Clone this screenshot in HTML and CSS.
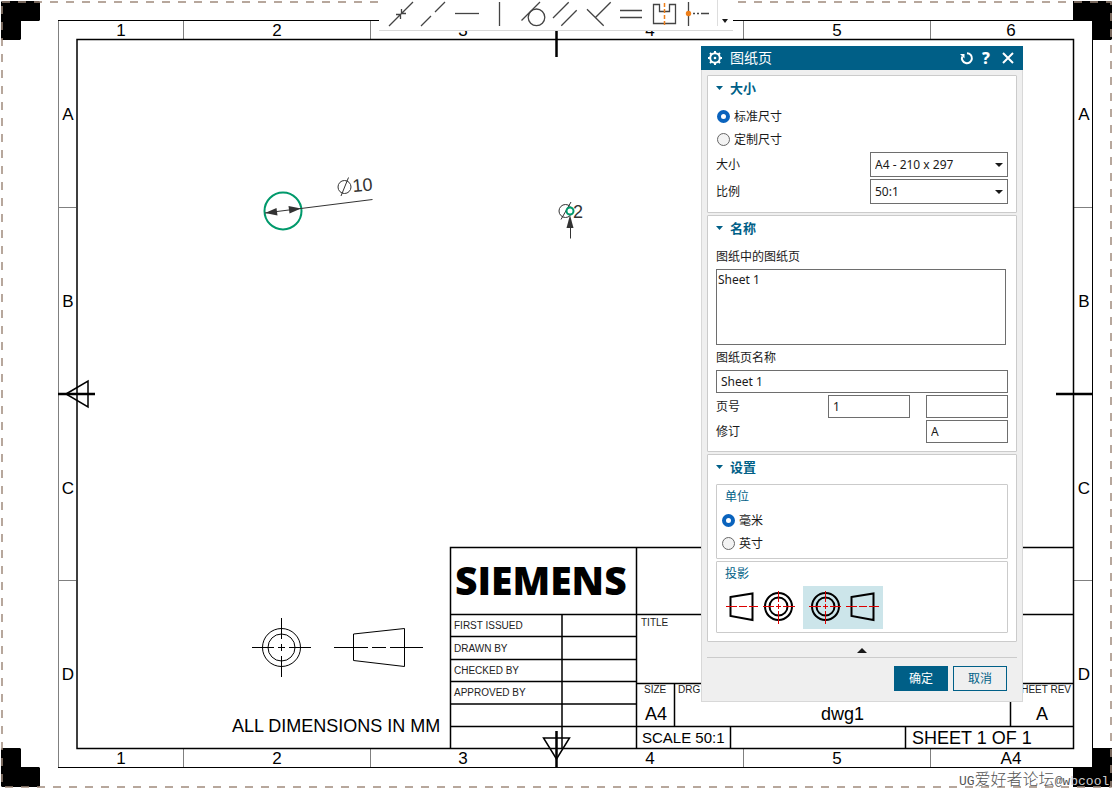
FILE: index.html
```html
<!DOCTYPE html>
<html lang="zh-CN">
<head>
<meta charset="utf-8">
<title>图纸页</title>
<link rel="stylesheet" href="styles.css">
</head>
<body>
<main class="workspace">
  <svg class="drawing" viewBox="0 0 1115 791" role="img" aria-label="dwg1">
    <!-- corner marks -->
    <g class="solid">
      <path d="M2 1H39L40 2V20L39 21H21V39L20 40H2L1 39V2Z"/>
      <path d="M1073 1H1111L1112 2V39L1111 40H1092V21H1073Z"/>
      <path d="M2 748H20L21 749V767H39L40 768V786L39 787H2L1 786V749Z"/>
      <path d="M1092 748H1112V787H1073V767H1092Z"/>
    </g>
    <path class="sheet-edge" d="M2 2H1111V787H2Z"/>
    <!-- frame -->
    <path class="thin gray" d="M58.5 21V767M183.500 21V39M370.500 21V39M743.500 21V39M930.500 21V39M183.500 749V767M370.500 749V767M743.500 749V767M930.500 749V767M58 207.500H76M58 580.500H76M1074 207.500H1092M1074 580.500H1092"/>
    <path class="thin" d="M58 20.500H1092.500V767.500H58"/>
    <path class="medium" d="M77 39.500H1073.500V748.500H77Z"/>
    <path class="heavy" d="M556.500 21V57M556.500 731V767M1056 394H1092M58 394H95"/>
    <path class="medium" d="M66 394L88 381V407ZM543.500 738H569.500L556.500 759Z"/>
    <g class="zone">
      <text x="121" y="36">1</text><text x="277" y="36">2</text><text x="463" y="36">3</text><text x="650" y="36">4</text><text x="837" y="36">5</text><text x="1011" y="36">6</text>
      <text x="121" y="764">1</text><text x="277" y="764">2</text><text x="463" y="764">3</text><text x="650" y="764">4</text><text x="837" y="764">5</text><text x="1011" y="764">A4</text>
      <text x="68" y="120">A</text><text x="68" y="307">B</text><text x="68" y="494">C</text><text x="68" y="680">D</text>
      <text x="1084" y="120">A</text><text x="1084" y="307">B</text><text x="1084" y="494">C</text><text x="1084" y="680">D</text>
    </g>
    <!-- diameter 10 -->
    <circle class="feature" cx="283" cy="211" r="18.500"/>
    <path class="dim" d="M265 213L372.500 199.500"/>
    <path class="arrowhead" d="M265 213L276.500 208L277.500 215.500ZM301 208.500L288.500 206L289.500 213.500Z"/>
    <g class="dim"><circle cx="344.500" cy="187" r="6.500"/><path d="M341 196L348.500 177.500"/></g>
    <text class="note dark" x="353" y="192" transform="rotate(-5 353 192)">10</text>
    <!-- diameter 2 -->
    <g class="dim"><circle cx="565.500" cy="211" r="6.500"/><path d="M561 219.500L571 202M570.500 226V238.500"/></g>
    <text class="note dark" x="573" y="218">2</text>
    <path class="arrowhead" d="M570 215L573.500 228H566.500Z"/>
    <circle class="feature paper" cx="570" cy="211" r="3.500"/>
    <!-- projection symbol -->
    <g class="thin">
      <circle cx="281.500" cy="647.500" r="19"/><circle cx="281.500" cy="647.500" r="13.500"/>
      <path d="M252 647.500H274M278 647.500H285M289 647.500H311M281.500 618V639M281.500 644V651M281.500 656V677"/>
      <path d="M353.500 634L404.500 628.500V666.500L353.500 660.500ZM334 647.500H368M372 647.500H386M390 647.500H423"/>
    </g>
    <text class="note" x="232" y="732">ALL DIMENSIONS IN MM</text>
    <!-- title block -->
    <path class="medium" d="M450.500 748V547.500H1073M636.500 547V748M450 614.500H1073M562 614V748M450 636.500H636M450 659.500H636M450 681.500H636M450 704H636M450 726.500H1073M636 683.500H1073M674.500 683V726M1010.500 683V726M730.500 726V748M905.500 726V748"/>
    <text class="brand" x="455" y="595">SIEMENS</text>
    <g class="caption">
      <text x="454" y="629">FIRST ISSUED</text><text x="454" y="652">DRAWN BY</text><text x="454" y="674">CHECKED BY</text><text x="454" y="696">APPROVED BY</text>
      <text x="641" y="626">TITLE</text><text x="644" y="693">SIZE</text><text x="678" y="693">DRG NO.</text><text x="1071" y="693" text-anchor="end">SHEET REV</text>
    </g>
    <text class="note" x="645" y="720">A4</text>
    <text class="note" x="821" y="720">dwg1</text>
    <text class="note" x="1036" y="720">A</text>
    <text class="scale-note" x="642" y="743">SCALE 50:1</text>
    <text class="note" x="912" y="744">SHEET 1 OF 1</text>
    <text class="watermark" x="959" y="785">UG<tspan class="watermark-han">爱好者论坛</tspan>@w<tspan class="watermark-light">bcool</tspan></text>
  </svg>

  <nav class="toolbar" aria-label="几何约束">
    <button class="tool" type="button" aria-label="点在线上"><svg viewBox="0 0 33 30"><path d="M5 26L29 2M17.500 9V13.500H22M12 14.500H16.500V19"/></svg></button>
    <button class="tool" type="button" aria-label="共线"><svg viewBox="0 0 33 30"><path d="M4 26L14 16M18 12L28 2"/></svg></button>
    <button class="tool" type="button" aria-label="水平"><svg viewBox="0 0 33 30"><path d="M5 13.500H29"/></svg></button>
    <button class="tool" type="button" aria-label="竖直"><svg viewBox="0 0 33 30"><path d="M16.500 2V26"/></svg></button>
    <button class="tool" type="button" aria-label="相切"><svg viewBox="0 0 33 30"><path d="M5.500 20.500L24 2"/><circle cx="20.500" cy="17.300" r="8.300"/></svg></button>
    <button class="tool" type="button" aria-label="平行"><svg viewBox="0 0 33 30"><path d="M4 18L19.700 2.300M12.300 25.700L27.700 10.300"/></svg></button>
    <button class="tool" type="button" aria-label="垂直"><svg viewBox="0 0 33 30"><path d="M28.700 2.300L13.700 17.300M5 9.300L21.700 25.700"/></svg></button>
    <button class="tool" type="button" aria-label="等长"><svg viewBox="0 0 33 30"><path d="M5 10.500H27M5 17.500H27"/></svg></button>
    <button class="tool" type="button" aria-label="对称"><svg viewBox="0 0 33 30"><path d="M5.500 4.500H11.500V11.500H21.500V4.500H27.500V23.500H5.500Z"/><path class="accent-line" d="M16.500 3V25"/></svg></button>
    <button class="tool" type="button" aria-label="中点对齐"><svg viewBox="0 0 33 30"><path d="M7.500 2V26M12 13.500H14M16 13.500H18M20 13.500H28"/><circle class="accent-dot" cx="7.500" cy="13.500" r="2.700"/></svg></button>
    <button class="tool-more" type="button" aria-label="更多"><svg viewBox="0 0 6 4"><path d="M0 0H6L3 4Z"/></svg></button>
  </nav>

  <form class="dialog" aria-labelledby="dialog-title">
    <header class="dialog-header">
      <svg class="gear" viewBox="0 0 16 16"><circle cx="8" cy="8" r="4.800"/><circle class="gear-core" cx="8" cy="8" r="1.300"/><path d="M8 1V3M8 13V15M1 8H3M13 8H15M3 3L4.500 4.500M11.500 11.500L13 13M13 3L11.500 4.500M4.500 11.500L3 13"/></svg>
      <h1 class="dialog-title" id="dialog-title">图纸页</h1>
      <button class="header-button" type="button" aria-label="重置"><svg viewBox="0 0 16 16"><path d="M9 3.200A5 5 0 1 1 4.200 6.500"/><path class="header-fill" d="M2 4H6.500V8.500Z"/></svg></button>
      <button class="header-button help" type="button" aria-label="帮助">?</button>
      <button class="header-button close" type="button" aria-label="关闭"><svg viewBox="0 0 16 16"><path d="M3 3L13 13M13 3L3 13"/></svg></button>
    </header>
    <div class="dialog-body">
      <section class="panel">
        <h2 class="panel-title"><svg class="disclosure" viewBox="0 0 7 4"><path d="M0 0H7L3.500 4Z"/></svg>大小</h2>
        <div class="panel-content">
          <label class="radio-row"><input class="radio" type="radio" name="size-kind" checked>标准尺寸</label>
          <label class="radio-row"><input class="radio" type="radio" name="size-kind">定制尺寸</label>
          <div class="select-rows">
            <div class="field-row"><label for="size">大小</label><span class="select-box"><select class="select" id="size"><option>A4 - 210 x 297</option></select><svg class="select-arrow" viewBox="0 0 8 4"><path d="M0 0H8L4 4Z"/></svg></span></div>
            <div class="field-row"><label for="ratio">比例</label><span class="select-box"><select class="select" id="ratio"><option>50:1</option></select><svg class="select-arrow" viewBox="0 0 8 4"><path d="M0 0H8L4 4Z"/></svg></span></div>
          </div>
        </div>
      </section>
      <section class="panel">
        <h2 class="panel-title"><svg class="disclosure" viewBox="0 0 7 4"><path d="M0 0H7L3.500 4Z"/></svg>名称</h2>
        <div class="panel-content">
          <label class="block-label" for="sheets">图纸中的图纸页</label>
          <textarea class="sheet-list" id="sheets">Sheet 1</textarea>
          <label class="block-label" for="sheet-name">图纸页名称</label>
          <div class="input-rows">
            <input class="input" id="sheet-name" type="text" value="Sheet 1">
            <div class="field-row"><label for="page">页号</label><span class="pair"><input class="input short" id="page" type="text" value="1"><input class="input short" type="text" aria-label="辅助页号"></span></div>
            <div class="field-row"><label for="revision">修订</label><input class="input short" id="revision" type="text" value="A"></div>
          </div>
        </div>
      </section>
      <section class="panel">
        <h2 class="panel-title"><svg class="disclosure" viewBox="0 0 7 4"><path d="M0 0H7L3.500 4Z"/></svg>设置</h2>
        <div class="panel-content groups">
          <div class="group">
            <h3 class="group-title">单位</h3>
            <label class="radio-row"><input class="radio" type="radio" name="unit" checked>毫米</label>
            <label class="radio-row"><input class="radio" type="radio" name="unit">英寸</label>
          </div>
          <div class="group">
            <h3 class="group-title">投影</h3>
            <div class="projections">
              <button class="projection" type="button" aria-label="第一角投影" aria-pressed="false"><svg viewBox="0 0 80 43"><path class="shape" d="M7.500 11L29.500 7.500V34L7.500 30Z"/><circle class="shape" cx="55.500" cy="20.500" r="13.500"/><circle class="shape" cx="55.500" cy="20.500" r="9"/><path class="axis" d="M3 20.500H14M16 20.500H24M26 20.500H35M40 20.500H51M53 20.500H58M60 20.500H72M55.500 5V16M55.500 18V23M55.500 25V38"/></svg></button>
              <button class="projection selected" type="button" aria-label="第三角投影" aria-pressed="true"><svg viewBox="0 0 80 43"><circle class="shape" cx="22.500" cy="20.500" r="13.500"/><circle class="shape" cx="22.500" cy="20.500" r="9"/><path class="shape" d="M48.500 11L70.500 7.500V34L48.500 30Z"/><path class="axis" d="M6 20.500H18M20 20.500H25M27 20.500H38M43 20.500H54M56 20.500H64M66 20.500H76M22.500 5V16M22.500 18V23M22.500 25V38"/></svg></button>
            </div>
          </div>
        </div>
      </section>
      <button class="collapse" type="button" aria-label="收起"><svg viewBox="0 0 10 5"><path d="M0 5H10L5 0Z"/></svg></button>
      <footer class="actions">
        <button class="action primary" type="submit">确定</button>
        <button class="action" type="button">取消</button>
      </footer>
    </div>
  </form>
</main>
</body>
</html>
```

FILE: styles.css
```css
* { box-sizing: border-box; }

body {
  margin: 0;
  background: #fff;
  color: #1a1a1a;
  font: 12px/16px "Noto Sans", "Noto Sans CJK SC", sans-serif;
}

button, input, select, textarea { font: inherit; color: inherit; }
button { padding: 0; border: 0; background: none; }
h1, h2, h3 { margin: 0; }

.workspace { position: relative; }

/* Drawing sheet */
.drawing {
  display: block;
  width: 100%;
  height: auto;
  font-family: "Liberation Sans", Arial, sans-serif;
}
.solid { fill: #000; }
.sheet-edge { fill: none; stroke: #a08a7c; stroke-width: 1.500; stroke-dasharray: 8 8; }
.thin { fill: none; stroke: #000; stroke-width: 1; }
.gray { stroke: #808080; }
.medium { fill: none; stroke: #000; stroke-width: 1.500; }
.heavy { fill: none; stroke: #000; stroke-width: 2.500; }
.zone { font-size: 17px; text-anchor: middle; }
.note { font-size: 18px; }
.scale-note { font-size: 15px; }
.dark { fill: #333; }
.caption { font-size: 10px; fill: #222; }
.brand { font: 800 39px "Open Sans", sans-serif; }
.feature { fill: none; stroke: #00996b; stroke-width: 2; }
.paper { fill: #fff; }
.dim { fill: none; stroke: #333; stroke-width: 1; }
.arrowhead { fill: #333; }
.watermark { font: 13px "Liberation Mono", monospace; fill: #555; }
.watermark-han { font: 300 16px "Noto Sans CJK SC", sans-serif; }
.watermark-light { fill: #ccc; }

/* Constraint toolbar */
.toolbar {
  position: absolute;
  top: 0;
  left: 34%;
  display: flex;
  padding: 0 0 0 5px;
  border-bottom: 1px solid #d8d8d8;
  background: #fff;
}
.tool { flex: none; width: 33px; height: 30px; }
.tool svg { display: block; width: 33px; height: 30px; fill: none; stroke: #444; stroke-width: 1.300; }
.tool .accent-line { stroke: #ee7f1a; stroke-width: 1.500; stroke-dasharray: 4 2; }
.tool .accent-dot { fill: #ee7f1a; stroke: none; }
.tool-more {
  display: flex;
  width: 16px;
  height: 26px;
  margin-left: 3px;
  padding: 19px 0 0 4px;
  border-left: 1px solid #ddd;
}
.tool-more svg { width: 6px; height: 4px; fill: #1a1a1a; }

/* Dialog */
.dialog {
  position: absolute;
  top: 46px;
  right: 92px;
  width: 322px;
  border: 1px solid #d8d8d8;
  border-top: 0;
  background: #efefef;
}
.dialog-header {
  display: flex;
  align-items: center;
  gap: 2px;
  height: 24px;
  margin: 0 -1px;
  padding: 0 6px;
  background: #005f87;
  color: #fff;
}
.dialog-header svg { width: 16px; height: 16px; fill: none; stroke: #fff; stroke-width: 2; }
.dialog-header .header-fill, .dialog-header .gear-core { fill: #fff; stroke: none; }
.dialog-title { flex: 1; padding-left: 5px; font-size: 14px; font-weight: 400; line-height: 20px; }
.header-button { display: grid; place-items: center; width: 18px; height: 20px; }
.close { margin-left: 2px; }
.help { font-size: 16px; font-weight: 800; }

.dialog-body { display: grid; gap: 2px; padding: 5px 5px 10px; }
.panel { padding: 0 8px 8px; border: 1px solid #cbcbcb; border-radius: 1px; background: #fff; }
.panel-title {
  display: flex;
  align-items: center;
  gap: 7px;
  height: 24px;
  color: #005f87;
  font-size: 13px;
  font-weight: 700;
}
.disclosure { width: 7px; height: 4px; fill: #005f87; }
.panel-content { padding-top: 5px; }
.radio-row { display: flex; align-items: center; gap: 4px; height: 23px; padding-left: 1px; }
.radio {
  appearance: none;
  width: 13px;
  height: 13px;
  margin: 0;
  border: 1px solid #666;
  border-radius: 50%;
  background: #f3f3f3;
}
.radio:checked { border: 4px solid #0a63bd; background: #fff; }
.select-rows, .input-rows { display: grid; gap: 2px; }
.select-rows { padding-top: 1px; }
.field-row { display: flex; justify-content: space-between; align-items: center; }
.select-box { display: grid; align-items: center; width: 138px; }
.select {
  grid-area: 1 / 1;
  appearance: none;
  width: 100%;
  height: 25px;
  padding: 0 20px 0 4px;
  border: 1px solid #6e6e6e;
  border-radius: 0;
  background: #fff;
}
.select-arrow { grid-area: 1 / 1; justify-self: end; width: 8px; height: 4px; margin-right: 5px; fill: #1a1a1a; pointer-events: none; }
.block-label { display: block; height: 24px; line-height: 24px; }
.sheet-list {
  display: block;
  width: calc(100% - 2px);
  height: 76px;
  margin-bottom: 1px;
  padding: 2px 1px;
  border: 1px solid #6e6e6e;
  background: #fff;
  resize: none;
}
.input { width: 100%; height: 23px; padding: 0 4px; border: 1px solid #6e6e6e; background: #fff; }
.short { width: 82px; }
.pair { display: flex; gap: 16px; }
.groups { display: grid; gap: 2px; }
.group { padding: 0 5px 3px; border: 1px solid #cbcbcb; border-radius: 1px; }
.group .radio-row { padding-left: 0; }
.group-title { padding-left: 3px; color: #005f87; font-size: 12px; font-weight: 400; line-height: 24px; }
.projections { display: flex; margin-left: 1px; }
.projection { width: 80px; height: 43px; }
.projection svg { display: block; width: 80px; height: 43px; }
.selected { background: #cce5ea; }
.shape { fill: none; stroke: #000; stroke-width: 2; }
.axis { fill: none; stroke: #d00; stroke-width: 1; }
.collapse { display: grid; place-items: center; height: 14px; border-bottom: 1px solid #cbcbcb; }
.collapse svg { width: 10px; height: 5px; fill: #1a1a1a; }
.actions { display: flex; justify-content: flex-end; gap: 5px; padding: 6px 10px 0 0; }
.action { width: 54px; height: 25px; border: 1px solid #005f87; color: #005f87; }
.primary { background: #005f87; color: #fff; }
```
